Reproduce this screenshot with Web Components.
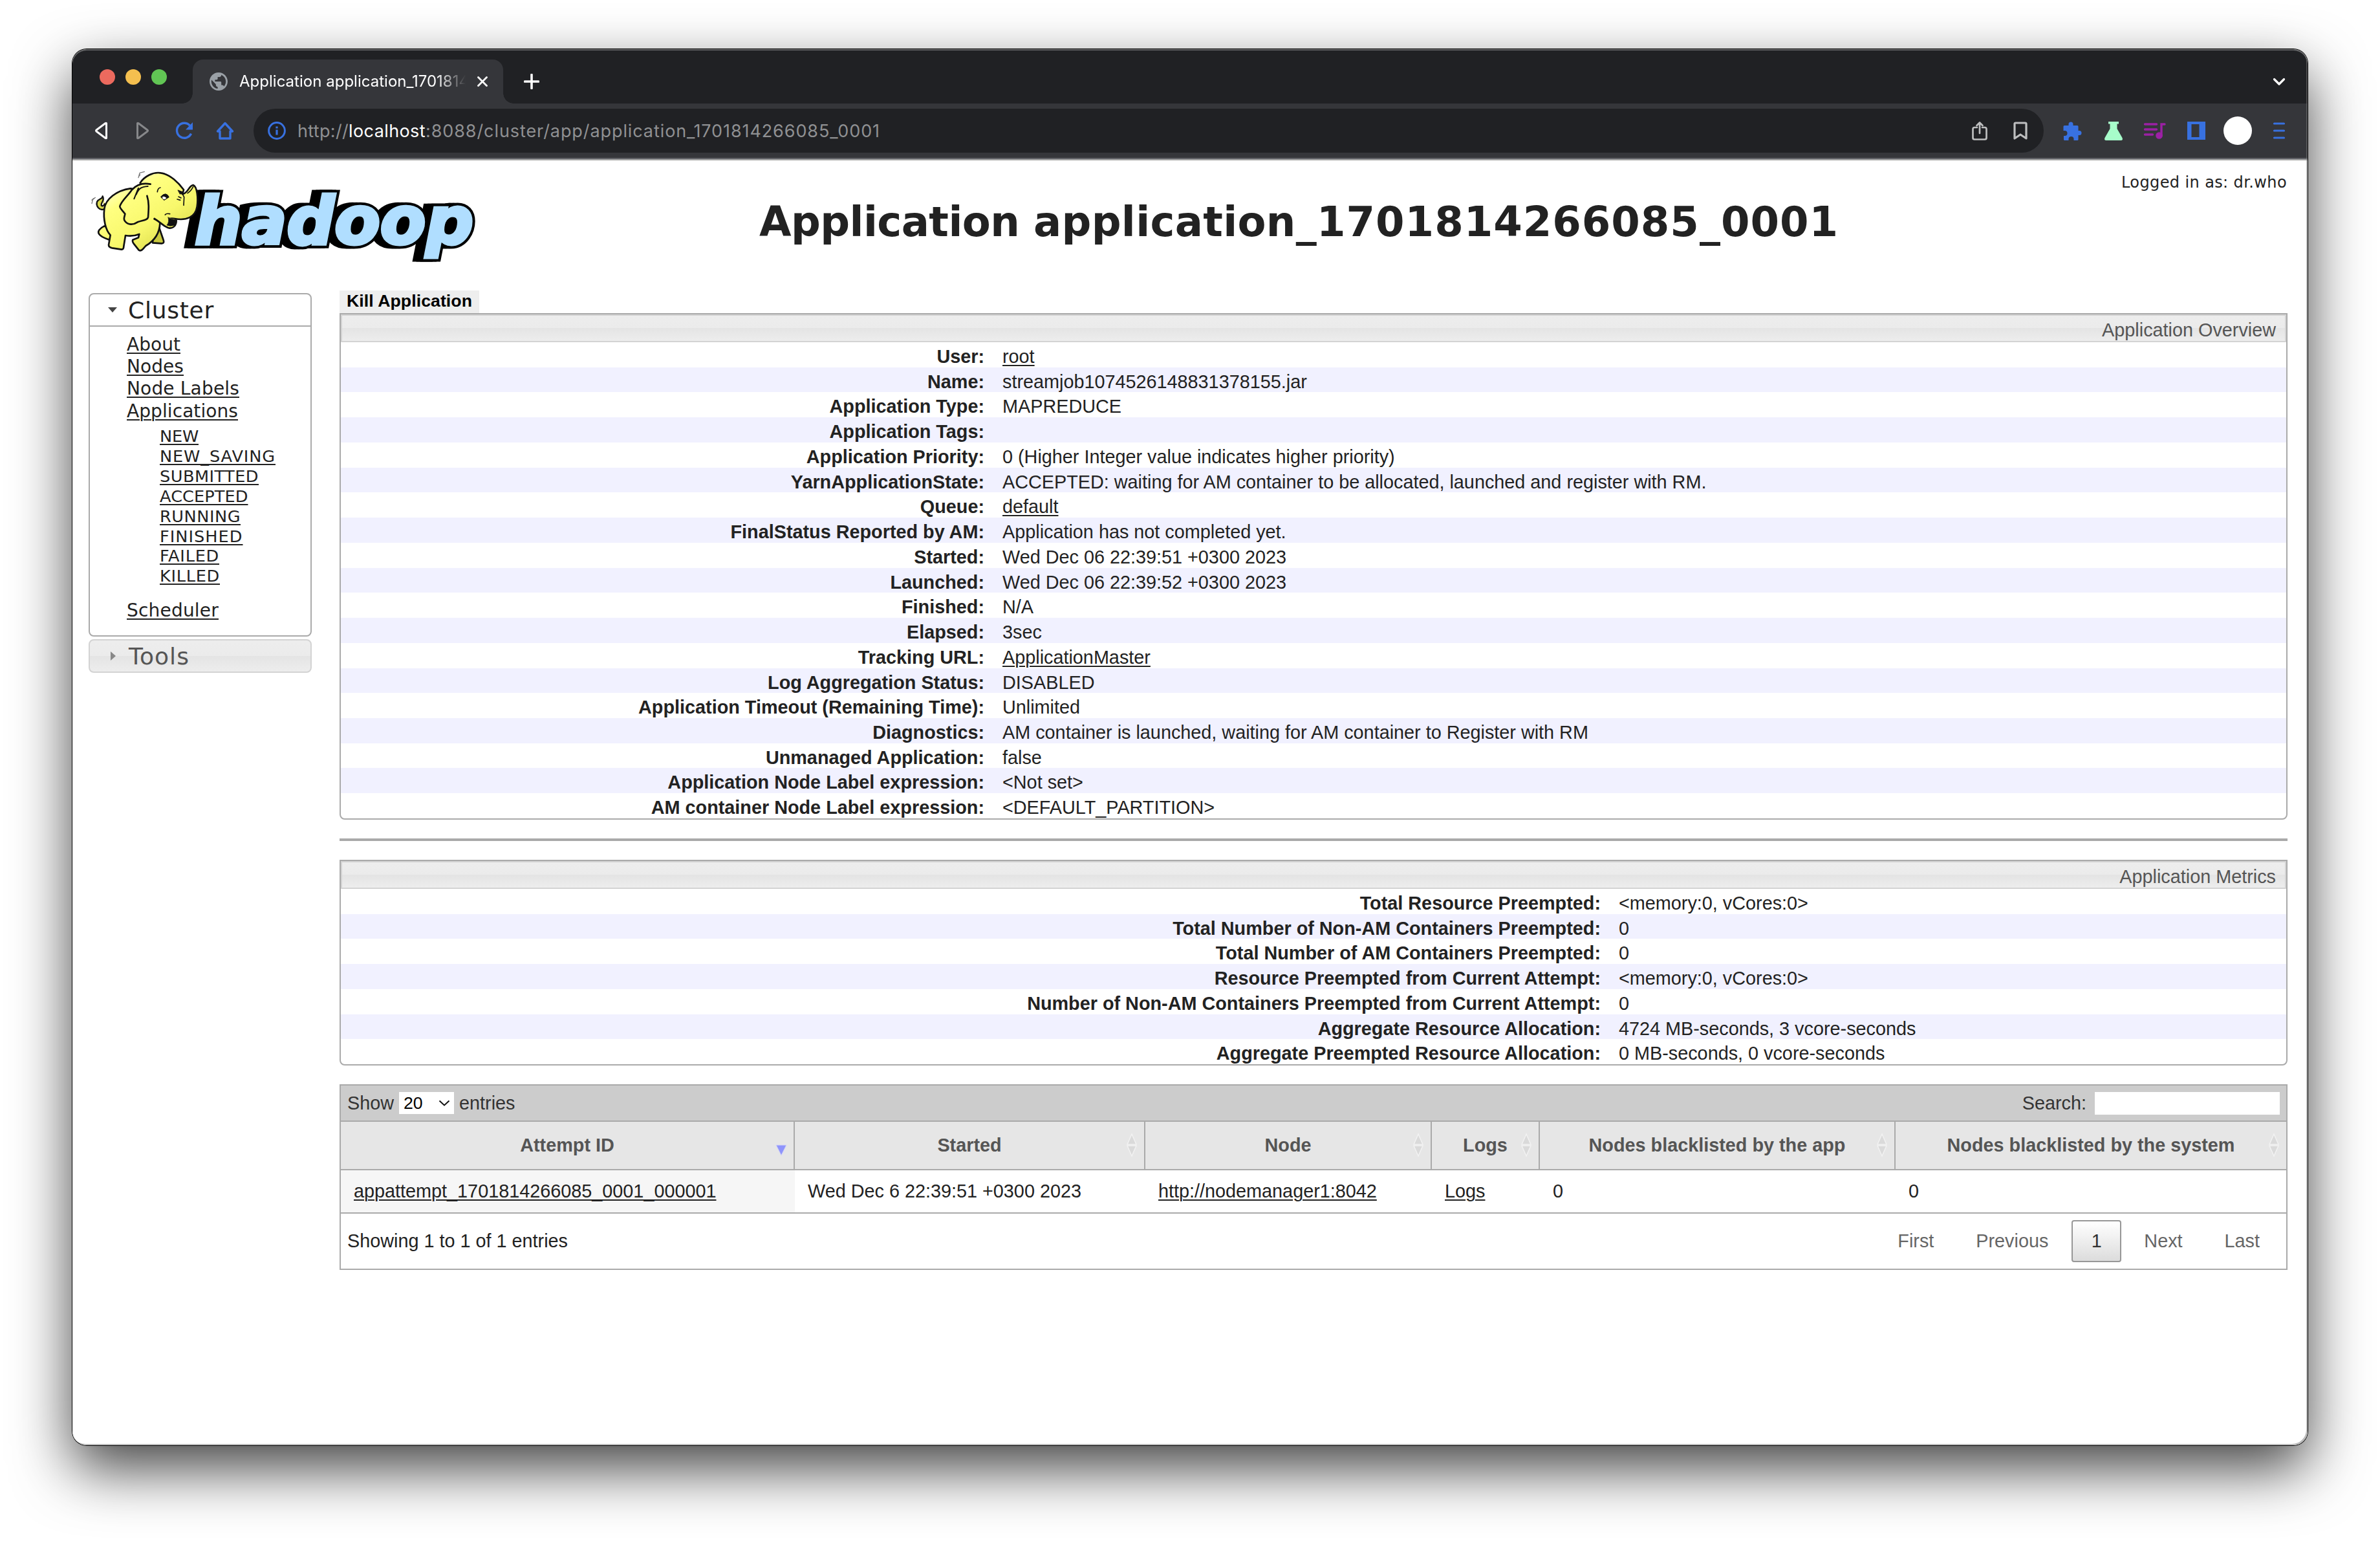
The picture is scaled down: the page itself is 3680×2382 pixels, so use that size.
<!DOCTYPE html>
<html lang="en">
<head>
<meta charset="utf-8">
<title>Application application_1701814266085_0001</title>
<style>
html,body{margin:0;background:#fff;}
body{width:3680px;height:2382px;overflow:hidden;display:flex;font-family:"Liberation Sans",Arial,sans-serif;}
</style>
</head>
<body>
<browser-window></browser-window>

<template id="t-window">
<style>
:host{display:flex;flex-direction:column;position:relative;width:3456px;height:2158px;margin:76px 0 0 112px;border-radius:22px;background:#fff;box-shadow:0 0 0 1px #000,0 36px 90px rgba(0,0,0,.74);box-sizing:border-box;}
.clip{display:flex;flex-direction:column;flex:1;border-radius:22px;overflow:hidden}
.edge{position:absolute;inset:0;border-radius:22px;pointer-events:none;box-shadow:inset 0 2px 0 rgba(255,255,255,.3),inset -2px -2px 0 rgba(120,120,120,.5)}
</style>
<div class="clip"><tab-strip></tab-strip><nav-bar></nav-bar><yarn-page></yarn-page></div>
<div class="edge"></div>
</template>

<template id="t-tabs">
<style>
:host{display:flex;height:84px;background:#202124;align-items:stretch;color:#fff;font-family:Inter,Roboto,sans-serif}
.lights{display:flex;gap:16px;padding:31px 0 0 42px;width:144px;box-sizing:content-box}
.lights i{width:24px;height:24px;border-radius:50%}
.tab{display:flex;align-items:center;width:480px;height:68px;margin-top:16px;background:#35363a;border-radius:16px 16px 0 0;position:relative;box-sizing:border-box;padding-left:26px}
.tab:before,.tab:after{content:"";position:absolute;bottom:0;width:16px;height:16px}
.tab:before{left:-16px;background:radial-gradient(circle at 0 0,transparent 15.5px,#35363a 16px)}
.tab:after{right:-16px;background:radial-gradient(circle at 100% 0,transparent 15.5px,#35363a 16px)}
.ttl{width:356px;margin-left:18px;white-space:nowrap;font-size:24px;line-height:34px;-webkit-mask-image:linear-gradient(90deg,#000 305px,transparent 350px);mask-image:linear-gradient(90deg,#000 305px,transparent 350px)}
.x{margin-left:12px}
.plus{margin:38px 0 0 32px}
.chev{margin:0 34px 0 auto;padding-top:42px}
svg{display:block;flex:none}
</style>
<div class="lights"><i style="background:#ec6a5e"></i><i style="background:#f4bf4f"></i><i style="background:#61c554"></i></div>
<div class="tab">
<svg width="28" height="28" viewBox="2 2 20 20"><path fill="#9aa0a6" d="M12 2C6.480 2 2 6.480 2 12s4.480 10 10 10 10-4.480 10-10S17.520 2 12 2zm-1 17.930c-3.950-.49-7-3.850-7-7.930 0-.62.080-1.210.21-1.790L9 15v1c0 1.100.9 2 2 2v1.930zm6.900-2.540c-.26-.81-1-1.390-1.900-1.390h-1v-3c0-.55-.45-1-1-1H8v-2h2c.55 0 1-.45 1-1V7h2c1.100 0 2-.9 2-2v-.41c2.930 1.190 5 4.060 5 7.410 0 2.080-.8 3.970-2.100 5.390z"/></svg>
<div class="ttl"><fit-text w="355">Application application_1701814</fit-text></div>
<svg class="x" width="16" height="16" viewBox="0 0 16 16"><path d="M1.500 1.500l13 13M14.500 1.500l-13 13" stroke="#fff" stroke-width="2.800" stroke-linecap="round"/></svg>
</div>
<svg class="plus" width="24" height="24" viewBox="0 0 24 24"><path d="M12 1.500v21M1.500 12h21" stroke="#fff" stroke-width="3.600" stroke-linecap="round"/></svg>
<svg class="chev" width="20" height="16" viewBox="0 0 20 16"><path d="M2.500 4.500l7.500 7.500 7.500-7.500" fill="none" stroke="#fff" stroke-width="3.200" stroke-linecap="round" stroke-linejoin="round"/></svg>
</template>

<template id="t-nav">
<style>
:host{display:flex;height:84px;box-sizing:content-box;border-bottom:2px solid #606165;background:#35363a;align-items:center;font-family:Inter,Roboto,sans-serif}
svg{display:block;flex:none;overflow:visible}
.url{display:flex;align-items:center;width:2768px;height:68px;border-radius:34px;background:#202124;margin-left:30px;box-sizing:border-box;padding-left:22px;color:#8f9092;font-size:27px;white-space:nowrap}
.url b{font-weight:400;color:#fff}
.txt{margin-left:18px;line-height:60px;padding-top:1px}
</style>
<svg style="margin-left:34px" width="22" height="28" viewBox="0 0 22 28"><path d="M18.500 2.500v23Q18 26 17 25.500L3 15q-1-1 0-2L17 2.500q1-.5 1.500 0z" fill="none" stroke="#fff" stroke-width="3" stroke-linejoin="round"/></svg>
<svg style="margin-left:42px" width="22" height="28" viewBox="0 0 22 28"><path d="M2.500 2.500v23q.5 .5 1.500 0L18 15q1-1 0-2L4 2.500q-1-.5-1.500 0z" fill="none" stroke="#87888a" stroke-width="3" stroke-linejoin="round"/></svg>
<svg style="margin-left:39px" width="28" height="28" viewBox="0 0 28 28"><path d="M24.500 18.500A11.500 11.500 0 1 1 22.500 6" fill="none" stroke="#3871e0" stroke-width="3.400"/><path d="M27 1v11.500H16z" fill="#3871e0"/></svg>
<svg style="margin-left:35px" width="28" height="28" viewBox="0 0 28 28"><path d="M14 2.500L2.500 15H6v11h16V15h3.500z" fill="none" stroke="#3871e0" stroke-width="3.400" stroke-linejoin="round"/></svg>
<div class="url">
<svg width="28" height="28" viewBox="0 0 28 28"><circle cx="14" cy="14" r="12.400" fill="none" stroke="#3871e0" stroke-width="3"/><path d="M14 12.500v8M14 7.500v3" stroke="#3871e0" stroke-width="3.200"/></svg>
<div class="txt"><fit-text w="79">http://</fit-text><b><fit-text w="119">localhost</fit-text></b><fit-text w="703">:8088/cluster/app/application_1701814266085_0001</fit-text></div>
<svg style="margin-left:auto" width="24" height="30" viewBox="0 0 24 30"><path d="M8 10H4q-2.500 0-2.500 2.500V26q0 2.500 2.500 2.500h16q2.500 0 2.500-2.500V12.500Q22.500 10 20 10h-4M12 19V3M7.500 7L12 2.500 16.500 7" fill="none" stroke="#bdbebf" stroke-width="2.700" stroke-linecap="round" stroke-linejoin="round"/></svg>
<svg style="margin:0 25px 0 40px" width="22" height="28" viewBox="0 0 22 28"><path d="M3.500 2h15q1.500 0 1.500 1.500V26l-9-6-9 6V3.500Q2 2 3.500 2z" fill="none" stroke="#bdbebf" stroke-width="3.200" stroke-linejoin="round"/></svg>
</div>
<svg style="margin-left:30px" width="29" height="29" viewBox="0 0 29 29"><path d="M2 6h6.500V4a3.500 3.500 0 0 1 7 0v2H22q1.500 0 1.500 1.500V14h1.500a3.500 3.500 0 0 1 0 7h-1.500v6.500q0 1.500-1.500 1.500h-5.500v-2a4 4 0 0 0-8 0v2H2.500Q1 29 1 27.500V22h1.500a4 4 0 0 0 0-8H.5V7.500Q.5 6 2 6z" fill="#3871e0"/></svg>
<svg style="margin-left:34px" width="30" height="29" viewBox="0 0 30 29"><path d="M7 0h16v3.500h-2.500V11l8 14q1.500 4-2 4h-23q-3.500 0-2-4l8-14V3.500H7z" fill="#a7fdca"/></svg>
<svg style="margin-left:32px" width="34" height="26" viewBox="0 0 34 26"><path d="M1.500 3h18M1.500 11h18M1.500 19h12M27 21V3h5" fill="none" stroke="#9c20a5" stroke-width="3.400" stroke-linecap="round"/><circle cx="23.500" cy="20.500" r="5.300" fill="#9c20a5"/></svg>
<svg style="margin-left:33px" width="28" height="28" viewBox="0 0 28 28"><path d="M0 0h28v28H0zM6.500 4v20h12V4z" fill-rule="evenodd" fill="#3871e0"/></svg>
<svg style="margin-left:28px" width="44" height="44" viewBox="0 0 44 44"><circle cx="22" cy="22" r="22" fill="#fff"/></svg>
<svg style="margin-left:33px" width="18" height="28" viewBox="0 0 18 28"><path d="M1.500 3h15M1.500 14h15M1.500 25h15" stroke="#3871e0" stroke-width="3.200" stroke-linecap="round"/></svg>
</template>

<template id="t-page">
<style>
:host{display:flex;flex-direction:column;flex:1;background:#fff;border-top:2px solid #aaa;color:#222}
header{display:flex;height:201px;font-family:"DejaVu Sans",Verdana,sans-serif}
hadoop-logo{margin:8px 0 0 28px}
h1{margin:63px 0 0 424px;font-size:64px;line-height:64px;font-weight:700;white-space:pre}
.user{margin:19px 32px 0 auto;font-size:24px;line-height:30px}
.main{display:flex;gap:43px;padding-left:25px}
.content{display:flex;flex-direction:column;width:3012px;align-items:stretch}
.kill{align-self:flex-start;height:35px;width:216px;background:#eee;color:#000;font:700 26.67px/33px "Liberation Sans",sans-serif;box-sizing:border-box;padding-left:11px}
.hr{height:4px;background:#aaa;margin:29px 0}
a{color:#222;text-decoration:underline;text-decoration-thickness:2px;text-underline-offset:3px}
app-attempts{margin-top:29px}
</style>
<header><hadoop-logo></hadoop-logo><h1><fit-text w="424">Application </fit-text><fit-text w="438">application_</fit-text><fit-text w="807">1701814266085_0001</fit-text></h1><div class="user"><fit-text w="256">Logged in as: dr.who</fit-text></div></header>
<div class="main">
<side-nav></side-nav>
<div class="content">
<div class="kill"><fit-text w="194">Kill Application</fit-text></div>
<info-table heading="Application Overview" style="--h:736px;--lw:995px">
<info-row label="User:"><a>root</a></info-row>
<info-row label="Name:">streamjob1074526148831378155.jar</info-row>
<info-row label="Application Type:">MAPREDUCE</info-row>
<info-row label="Application Tags:"></info-row>
<info-row label="Application Priority:">0 (Higher Integer value indicates higher priority)</info-row>
<info-row label="YarnApplicationState:">ACCEPTED: waiting for AM container to be allocated, launched and register with RM.</info-row>
<info-row label="Queue:"><a>default</a></info-row>
<info-row label="FinalStatus Reported by AM:">Application has not completed yet.</info-row>
<info-row label="Started:">Wed Dec 06 22:39:51 +0300 2023</info-row>
<info-row label="Launched:">Wed Dec 06 22:39:52 +0300 2023</info-row>
<info-row label="Finished:">N/A</info-row>
<info-row label="Elapsed:">3sec</info-row>
<info-row label="Tracking URL:"><a>ApplicationMaster</a></info-row>
<info-row label="Log Aggregation Status:">DISABLED</info-row>
<info-row label="Application Timeout (Remaining Time):">Unlimited</info-row>
<info-row label="Diagnostics:">AM container is launched, waiting for AM container to Register with RM</info-row>
<info-row label="Unmanaged Application:">false</info-row>
<info-row label="Application Node Label expression:">&lt;Not set&gt;</info-row>
<info-row label="AM container Node Label expression:">&lt;DEFAULT_PARTITION&gt;</info-row>
</info-table>
<div class="hr"></div>
<info-table heading="Application Metrics" style="--h:271px;--lw:1948px">
<info-row label="Total Resource Preempted:">&lt;memory:0, vCores:0&gt;</info-row>
<info-row label="Total Number of Non-AM Containers Preempted:">0</info-row>
<info-row label="Total Number of AM Containers Preempted:">0</info-row>
<info-row label="Resource Preempted from Current Attempt:">&lt;memory:0, vCores:0&gt;</info-row>
<info-row label="Number of Non-AM Containers Preempted from Current Attempt:">0</info-row>
<info-row label="Aggregate Resource Allocation:">4724 MB-seconds, 3 vcore-seconds</info-row>
<info-row label="Aggregate Preempted Resource Allocation:">0 MB-seconds, 0 vcore-seconds</info-row>
</info-table>
<app-attempts></app-attempts>
</div>
</div>
</template>

<template id="t-logo">
<style>:host{display:block;width:610px;height:156px}svg{display:block;overflow:visible}</style>
<svg width="610" height="156" viewBox="140 256 610 156">
<defs>
<text id="word" x="301" y="377" font-family="DejaVu Sans" font-weight="700" font-style="italic" font-size="101" textLength="431" lengthAdjust="spacingAndGlyphs">hadoop</text>
<linearGradient id="skin" gradientUnits="userSpaceOnUse" x1="130" y1="70" x2="330" y2="380"><stop offset="0" stop-color="#ffffd8"/><stop offset=".3" stop-color="#ffff80"/><stop offset=".7" stop-color="#f8f86c"/><stop offset="1" stop-color="#e2e252"/></linearGradient>
</defs>
<g stroke-linejoin="miter">
<use href="#word" x="-12" y="0" fill="#000" stroke="#000" stroke-width="13"/>
<use href="#word" x="-6" y="0" fill="#000" stroke="#000" stroke-width="13"/>
<use href="#word" fill="#000" stroke="#000" stroke-width="13"/>
<use href="#word" fill="#b0deff" stroke="#b0deff" stroke-width="5"/>
</g>
<g transform="translate(130 256) scale(.33333)" fill="url(#skin)" stroke="#111" stroke-width="8" stroke-linejoin="round" stroke-linecap="round">
<path d="M92 202C72 210 54 188 60 168 66 152 84 158 86 142M86 142C98 162 76 172 80 184 84 190 92 186 96 178" fill="#d8d84a" stroke-width="7"/>
<path d="M94 280C74 290 60 305 70 318 82 334 100 338 118 344L130 300z"/>
<path d="M350 292L368 345Q374 360 360 361L318 358 322 310z" fill="#c9c93e"/>
<path d="M215 106C150 115 100 155 94 200 88 250 100 300 122 322L114 368Q114 378 130 382L174 389Q184 388 184 374L192 324Q225 330 256 318L252 334 226 344Q222 352 232 364L254 392Q264 398 274 386L286 372C320 352 350 318 352 268L330 120z"/>
<path d="M260 80C280 50 320 28 356 34 400 40 440 82 462 112 462 124 450 128 456 132 484 128 484 94 506 90 524 96 530 150 524 190 516 240 474 256 420 246L392 242Q372 258 326 248"/>
<path d="M326 248L300 240 262 180 300 100 400 120 420 240z" stroke="none"/>
<path d="M328 246C362 268 376 288 396 290 414 290 428 278 428 254L420 248Q400 248 390 238L372 240z" stroke="none"/>
<path d="M326 246C362 268 376 288 396 290 414 290 428 278 428 254" fill="none"/>
<path d="M390 240Q396 262 384 276 400 284 420 276L426 250Q404 250 390 240z" fill="#111" stroke-width="2"/>
<path d="M308 86C270 78 240 92 222 112 204 140 176 160 166 188 164 196 176 206 190 224 188 238 180 248 190 258 204 276 228 276 248 262 266 254 294 254 297 240 300 200 302 170 292 140"/>
<path d="M296 96C262 98 252 108 242 134M252 104L232 154" fill="none" stroke-width="6"/>
<path d="M340 122Q342 104 354 102M480 128Q496 118 506 98M456 130L464 146 462 184M438 144L450 150M432 156L446 160M376 228Q382 220 398 224" fill="none" stroke-width="5"/>
<path d="M356 144Q380 118 394 146L372 160z" fill="#111" stroke-width="3"/>
<path d="M436 114L462 124 446 132z" fill="#111" stroke-width="3"/>
<path d="M364 144Q374 142 382 150 376 160 364 154z" fill="#fff" stroke="none"/>
<path d="M252 56L258 34 280 28M260 42L256 48M36 176L40 158 52 148M36 160L44 152" fill="none" stroke="#777" stroke-width="4"/>
</g>
</svg>
</template>

<template id="t-side">
<style>
:host{display:block;width:345px;margin-top:4px;font-family:"DejaVu Sans",Verdana,sans-serif;color:#222}
.box{border:2px solid #aaa;border-radius:8px;height:531px;box-sizing:border-box}
.hd{display:flex;align-items:center;height:48px;border-bottom:2px solid #aaa;font-size:36px;line-height:48px}
.hd span,.tools span{margin-left:59px;padding-top:1px}
ul{list-style:none;margin:0;padding:0}
.l1{padding:11px 0 0 57px;font-size:28px;line-height:34.200px}
.l2{margin:6.500px 0 20.500px 51px;font-size:25.600px;line-height:30.850px}
a{text-decoration:underline;text-decoration-thickness:2px;text-underline-offset:3px}
fit-text{vertical-align:top}
.tri{margin-left:28px;width:0;height:0;flex:none;border:7px solid transparent;border-bottom:0;border-top:8px solid #444}
.hd .tri + span{margin-left:17px}
.tools{display:flex;align-items:center;height:52px;margin-top:4px;box-sizing:border-box;border:2px solid #d3d3d3;border-radius:8px;background:linear-gradient(#ededed 0,#ebebeb 50%,#e4e4e4 50%,#ededed 100%);font-size:36px;line-height:44px;color:#555}
.tools .tri{margin-left:32px;border:7px solid transparent;border-right:0;border-left:8px solid #888}
.tools .tri + span{margin-left:20px}
</style>
<div class="box"><div class="hd"><div class="tri"></div><span><fit-text w="133">Cluster</fit-text></span></div>
<ul class="l1"><li><a><fit-text w="83">About</fit-text></a></li><li><a><fit-text w="88">Nodes</fit-text></a></li><li><a><fit-text w="174">Node Labels</fit-text></a></li><li><a><fit-text w="172">Applications</fit-text></a>
<ul class="l2"><li><a><fit-text w="60">NEW</fit-text></a></li><li><a><fit-text w="179">NEW_SAVING</fit-text></a></li><li><a><fit-text w="153">SUBMITTED</fit-text></a></li><li><a><fit-text w="136.500">ACCEPTED</fit-text></a></li><li><a><fit-text w="125">RUNNING</fit-text></a></li><li><a><fit-text w="128.500">FINISHED</fit-text></a></li><li><a><fit-text w="92">FAILED</fit-text></a></li><li><a><fit-text w="93">KILLED</fit-text></a></li></ul></li>
<li><a><fit-text w="142">Scheduler</fit-text></a></li></ul></div>
<div class="tools"><div class="tri"></div><span><fit-text w="94">Tools</fit-text></span></div>
</template>

<template id="t-info">
<style>
:host{display:flex;flex-direction:column;box-sizing:border-box;border:2px solid #aaa;border-radius:0 0 8px 8px;overflow:hidden;width:3012px}
.h{height:43px;box-sizing:border-box;border:2px solid #d3d3d3;background:linear-gradient(#ededed 0,#ebebeb 50%,#e4e4e4 50%,#ededed 100%);text-align:right;padding-right:14px;font-size:28.800px;line-height:44px;color:#555;white-space:nowrap}
.b{display:flex;flex-direction:column;height:var(--h)}
</style>
<div class="h"></div><div class="b"><slot></slot></div>
</template>

<template id="t-row">
<style>
:host{display:flex;flex:1 1 0;min-height:0;align-items:flex-start;font-size:28.800px;line-height:45px;white-space:nowrap;color:#222}
:host(:nth-of-type(even)){background:#f1f1ff}
b{width:var(--lw);text-align:right;flex:none}
span{margin-left:28px}
</style>
<b></b><span><slot></slot></span>
</template>

<template id="t-att">
<style>
:host{display:block;border:2px solid #aaa;box-sizing:border-box;height:287px;color:#222;font-size:28.800px;white-space:nowrap}
.bar{display:flex;align-items:center;height:54px;background:#ccc;border-bottom:2px solid #aaa;color:#333;padding:0 10px 0 10px;line-height:53px}
.bar > *{flex:none}
.sel{display:flex;align-items:center;justify-content:space-between;width:85px;height:34px;margin:0 8px 0 8px;background:#fff;color:#000;font-size:26.670px;line-height:36px;box-sizing:border-box;padding:0 6px 0 7px}
.inp{width:286px;height:35px;background:#fff;margin-left:13px}
.g{display:grid;grid-template-columns:702px 542px 443px 167px 550px 1fr}
.th{height:73px;border-bottom:2px solid #aaa;background:#e6e6e6;color:#555;font-weight:700;line-height:73px;text-align:center}
.th div{border-right:2px solid #aaa;position:relative}
.th div:last-child{border:0}
.th svg{position:absolute;right:9px;top:17px}
.td{height:65px;border-bottom:2px solid #aaa;line-height:65px}
.td div{padding-left:20px}
.td div:first-child{background:#f6f6f6}
a{text-decoration:underline;text-decoration-thickness:2px;text-underline-offset:3px;text-decoration-skip-ink:auto}
.ft{display:flex;align-items:center;height:85px;line-height:83px;padding:0 41px 0 10px;background:#fff}
.ft .s{margin-right:auto;margin-top:-1px}
.p{color:#666;margin-top:-1px}
.one{width:77px;height:65px;box-sizing:border-box;border:2px solid #979797;border-radius:4px;background:linear-gradient(#fff,#dcdcdc);text-align:center;line-height:60px;color:#333;margin:0 35px 0 36px}
</style>
<div class="bar">Show<span class="sel">20<svg width="18" height="10" viewBox="0 0 18 10"><path d="M1.500 1.500L9 8.500l7.500-7" fill="none" stroke="#111" stroke-width="2"/></svg></span>entries<span style="margin-left:auto">Search:</span><span class="inp"></span></div>
<div class="g th"></div>
<div class="g td"><div><a>appattempt_1701814266085_0001_000001</a></div><div>Wed Dec 6 22:39:51 +0300 2023</div><div><a>http://nodemanager1:8042</a></div><div><a>Logs</a></div><div>0</div><div>0</div></div>
<div class="ft"><span class="s">Showing 1 to 1 of 1 entries</span><span class="p">First</span><span class="p" style="margin-left:65px">Previous</span><span class="one">1</span><span class="p">Next</span><span class="p" style="margin-left:65px">Last</span></div>
</template>

<script>
const mount = (el, id) => {
  const root = el.attachShadow({ mode: "open" });
  root.appendChild(document.getElementById(id).content.cloneNode(true));
  return root;
};
const simple = (name, id) => customElements.define(name, class extends HTMLElement {
  constructor() { super(); mount(this, id); }
});

simple("browser-window", "t-window");
simple("tab-strip", "t-tabs");
simple("nav-bar", "t-nav");
simple("yarn-page", "t-page");
simple("hadoop-logo", "t-logo");
simple("side-nav", "t-side");

customElements.define("info-table", class extends HTMLElement {
  connectedCallback() {
    if (this.shadowRoot) return;
    mount(this, "t-info").querySelector(".h").textContent = this.getAttribute("heading");
  }
});

customElements.define("info-row", class extends HTMLElement {
  connectedCallback() {
    if (this.shadowRoot) return;
    mount(this, "t-row").querySelector("b").textContent = this.getAttribute("label");
  }
});

customElements.define("app-attempts", class extends HTMLElement {
  constructor() {
    super();
    const root = mount(this, "t-att");
    const both = '<svg width="20" height="38" viewBox="0 0 20 38"><path d="M10 2l7 16H3zM10 36l7-16H3z" fill="#dadada" stroke="#f2f2f2" stroke-width="1.500"/></svg>';
    const desc = '<svg width="20" height="38" viewBox="0 0 20 38"><path d="M2 19h16L10 35z" fill="#8f94fb" stroke="#d5d6f5" stroke-width="1"/></svg>';
    root.querySelector(".th").innerHTML =
      ["Attempt ID", "Started", "Node", "Logs", "Nodes blacklisted by the app", "Nodes blacklisted by the system"]
        .map((t, i) => `<div>${t}${i ? both : desc}</div>`).join("");
  }
});

/* Tracks its text out, or in, so that it spans the width given in "w". */
customElements.define("fit-text", class extends HTMLElement {
  connectedCallback() {
    if (this.shadowRoot) return;
    const root = this.attachShadow({ mode: "open" });
    root.innerHTML = "<style>:host{display:inline;white-space:pre}</style><slot></slot>";
    const w = parseFloat(this.getAttribute("w"));
    const natural = this.getBoundingClientRect().width;
    if (w && natural) this.style.letterSpacing = (w - natural) / this.textContent.length + "px";
  }
});
</script>
</body>
</html>
